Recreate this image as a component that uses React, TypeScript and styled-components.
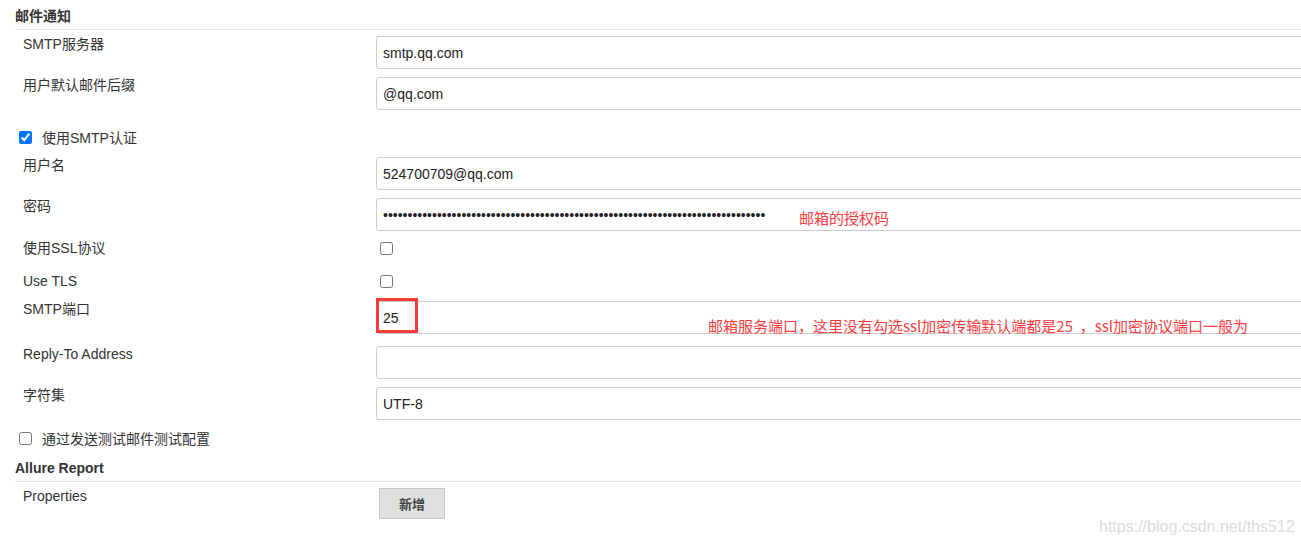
import React from "react";
import styled, { createGlobalStyle } from "styled-components";

const GlobalStyle = createGlobalStyle`
  html, body {
    margin: 0;
    padding: 0;
    background: #ffffff;
    overflow: hidden;
  }
  body {
    font-family: "Liberation Sans", Arial, "Noto Sans CJK SC", sans-serif;
    color: #333333;
  }
`;

const Page = styled.div`
  position: relative;
  width: 1320px;
  height: 546px;
  box-sizing: border-box;
  padding-left: 15px;
  display: flex;
  flex-direction: column;
`;

const SectionHeader = styled.div<{ $mt?: number }>`
  margin-top: ${(p) => p.$mt ?? 0}px;
  padding: 6px 0 3px;
  font-size: 14px;
  line-height: 20px;
  font-weight: bold;
  color: #333333;
  border-bottom: 1px solid #e3e3e3;
`;

const FieldRow = styled.div<{ $mt: number; $center?: boolean }>`
  margin-top: ${(p) => p.$mt}px;
  display: grid;
  grid-template-columns: 353px 1fr;
  padding-left: 8px;
  align-items: ${(p) => (p.$center ? "center" : "start")};
  min-height: ${(p) => (p.$center ? "20px" : "0")};
`;

const Label = styled.div<{ $lh?: number }>`
  font-size: 14px;
  line-height: ${(p) => p.$lh ?? 17}px;
  color: #333333;
`;

const Control = styled.div`
  position: relative;
  display: flex;
  align-items: center;
`;

const TextInput = styled.input`
  box-sizing: border-box;
  width: 100%;
  height: 33px;
  margin: 0;
  padding: 0 6px;
  border: 1px solid #cccccc;
  border-radius: 3px;
  background: #ffffff;
  font-family: "Liberation Sans", Arial, "Noto Sans CJK SC", sans-serif;
  font-size: 14px;
  color: #222222;
  outline: none;
`;

const Check = styled.input<{ $ml?: number }>`
  width: 13px;
  height: 13px;
  margin: 0 0 0 ${(p) => p.$ml ?? 0}px;
  accent-color: #0075ff;
`;

const InlineCheckRow = styled.label<{ $mt: number }>`
  margin-top: ${(p) => p.$mt}px;
  height: 20px;
  display: flex;
  align-items: center;
  gap: 10px;
  padding-left: 4px;
  font-size: 14px;
  color: #333333;
`;

const AddButton = styled.button`
  margin-left: 3px;
  width: 66px;
  height: 31px;
  box-sizing: border-box;
  border: 1px solid #c6c6c6;
  background: #e0e0e0;
  font-family: "Liberation Sans", Arial, "Noto Sans CJK SC", sans-serif;
  font-size: 13px;
  font-weight: bold;
  color: #444444;
  padding: 0;
`;

const Annotation = styled.span<{ $left: number; $top: number }>`
  position: absolute;
  left: ${(p) => p.$left}px;
  top: ${(p) => p.$top}px;
  font-family: "Noto Sans CJK SC", "Liberation Sans", sans-serif;
  font-size: 15px;
  line-height: 20px;
  color: #ff3b3b;
  white-space: pre;
  pointer-events: none;
`;

const RedBox = styled.div`
  position: absolute;
  left: 0;
  top: -3px;
  width: 42px;
  height: 35px;
  box-sizing: border-box;
  border: 3px solid #ff3838;
  pointer-events: none;
`;

const Watermark = styled.div`
  position: absolute;
  left: 1099px;
  top: 516px;
  font-family: "Liberation Sans", Arial, sans-serif;
  font-size: 16px;
  line-height: 22px;
  color: #dcdcdc;
  white-space: nowrap;
`;

const password = "x".repeat(78);

export default function App() {
  return (
    <>
      <GlobalStyle />
      <Page>
        <SectionHeader>邮件通知</SectionHeader>

        <FieldRow $mt={6}>
          <Label>SMTP服务器</Label>
          <Control>
            <TextInput defaultValue="smtp.qq.com" />
          </Control>
        </FieldRow>

        <FieldRow $mt={8}>
          <Label>用户默认邮件后缀</Label>
          <Control>
            <TextInput defaultValue="@qq.com" />
          </Control>
        </FieldRow>

        <InlineCheckRow $mt={17}>
          <Check type="checkbox" defaultChecked />
          使用SMTP认证
        </InlineCheckRow>

        <FieldRow $mt={10}>
          <Label>用户名</Label>
          <Control>
            <TextInput defaultValue="524700709@qq.com" />
          </Control>
        </FieldRow>

        <FieldRow $mt={8}>
          <Label>密码</Label>
          <Control>
            <TextInput type="password" defaultValue={password} />
            <Annotation $left={423} $top={10}>邮箱的授权码</Annotation>
          </Control>
        </FieldRow>

        <FieldRow $mt={7} $center>
          <Label $lh={20}>使用SSL协议</Label>
          <Control>
            <Check type="checkbox" $ml={4} />
          </Control>
        </FieldRow>

        <FieldRow $mt={13} $center>
          <Label $lh={20}>Use TLS</Label>
          <Control>
            <Check type="checkbox" $ml={4} />
          </Control>
        </FieldRow>

        <FieldRow $mt={10}>
          <Label>SMTP端口</Label>
          <Control>
            <TextInput defaultValue="25" />
            <RedBox />
            <Annotation $left={332} $top={15}>
              {"邮箱服务端口，这里没有勾选ssl加密传输默认端都是25  ，ssl加密协议端口一般为"}
            </Annotation>
          </Control>
        </FieldRow>

        <FieldRow $mt={12}>
          <Label>Reply-To Address</Label>
          <Control>
            <TextInput defaultValue="" />
          </Control>
        </FieldRow>

        <FieldRow $mt={8}>
          <Label>字符集</Label>
          <Control>
            <TextInput defaultValue="UTF-8" />
          </Control>
        </FieldRow>

        <InlineCheckRow $mt={8}>
          <Check type="checkbox" />
          通过发送测试邮件测试配置
        </InlineCheckRow>

        <SectionHeader $mt={4}>Allure Report</SectionHeader>

        <FieldRow $mt={6}>
          <Label>Properties</Label>
          <Control>
            <AddButton type="button">新增</AddButton>
          </Control>
        </FieldRow>

        <Watermark>https://blog.csdn.net/ths512</Watermark>
      </Page>
    </>
  );
}
